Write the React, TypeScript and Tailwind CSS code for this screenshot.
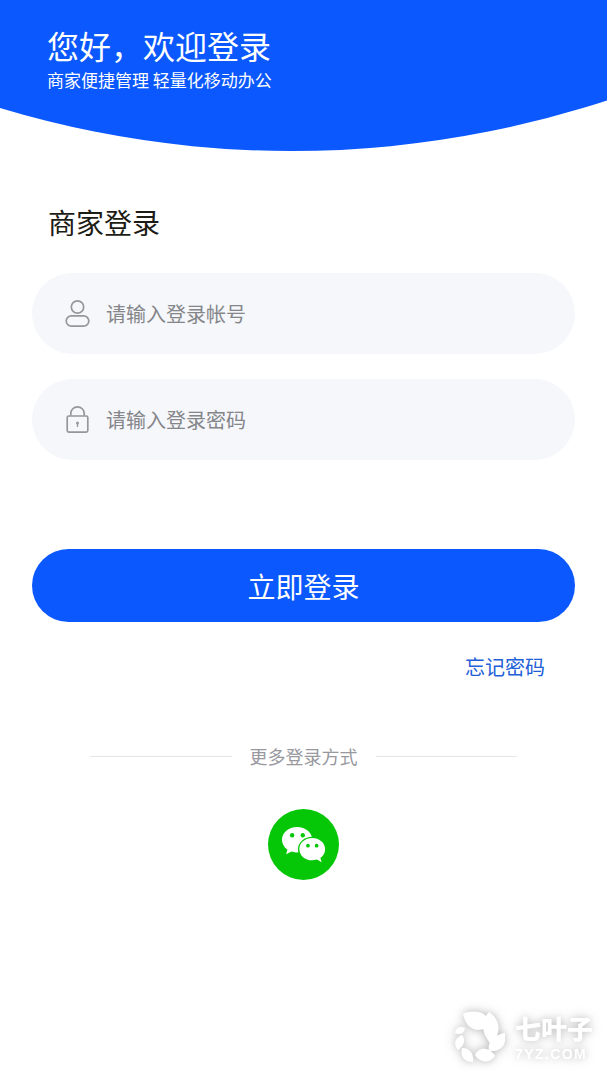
import { useState } from 'react';
import type { FormEvent, ReactNode } from 'react';

type FieldProps = {
  id: string;
  label: string;
  type: string;
  value: string;
  onChange: (value: string) => void;
  icon: ReactNode;
};

const UserIcon = () => (
  <svg width="26" height="30" viewBox="0 0 26 30" fill="none" stroke="#96979b" strokeWidth="1.7" aria-hidden="true">
    <circle cx="13.5" cy="8" r="6.2" />
    <rect x="2.2" y="16.8" width="22.6" height="10.4" rx="5.2" />
  </svg>
);

const LockIcon = () => (
  <svg width="26" height="30" viewBox="0 0 26 30" fill="none" stroke="#96979b" strokeWidth="1.7" aria-hidden="true">
    <rect x="3.2" y="11" width="20.6" height="16.2" rx="1.6" />
    <path d="M6.8 10.8V8.5a6.7 6.7 0 0 1 13.4 0v2.3" />
    <circle cx="13.5" cy="18" r="1.5" fill="#96979b" stroke="none" />
    <path d="M13.5 18v4" strokeWidth="1.3" />
  </svg>
);

const WechatIcon = () => (
  <svg className="w-full h-full" viewBox="0 0 72 72" aria-hidden="true">
    <path fill="#fff" d="M29.5 18.2c-8.7 0-15.3 5.9-15.3 13 0 4.1 2.1 7.6 5.5 10l-1.3 4.8 5.6-2.9c1.7.6 3.5.9 5.5.9 8.6 0 15.500-5.900 15.500-12.800s-6.900-13-15.500-13z" />
    <ellipse cx="44.8" cy="40.8" rx="14.4" ry="12.7" fill="#05c707" />
    <path fill="#fff" d="M44.8 29.5c-7.3 0-13 5-13 11.200 0 6.300 5.700 11.300 13 11.300 1.700 0 3.300-.3 4.800-.8l4.800 2.700-1.300-4.300c2.900-2 4.800-5.200 4.800-8.900 0-6.200-5.800-11.200-13.100-11.200z" />
    <circle cx="24.5" cy="26.6" r="2.2" fill="#05c707" />
    <circle cx="35.3" cy="26.6" r="2.2" fill="#05c707" />
    <circle cx="40.5" cy="37.2" r="1.9" fill="#05c707" />
    <circle cx="49.3" cy="37.2" r="1.9" fill="#05c707" />
  </svg>
);

const LeafLogo = () => (
  <svg width="50" height="56" viewBox="0 0 50 56" fill="#fff" aria-hidden="true">
    <path d="M8 5.500C17 2 27 3 32 9c3 4 4 9 4 14-5-2-8-2-13-1C14 21 10 15 8 5.500z" />
    <path d="M34 4c8 5 12 14 8 24l-6 10c-2-6-6-9-7-14-2-7 0-15 5-20z" />
    <path d="M50 25c2 11-3 19-16 18-2-9 5-16 16-18z" />
    <path d="M20 47c4-9 15-8 20 1-6 8-15 7-20-1z" />
    <path d="M7 40c8 0 12 6 11 14-9 0-13-6-11-14z" />
    <path d="M7 27c4 5 2 11-4 15-5-6-3-12 4-15z" />
    <path d="M0 25c1-6 6-7 10-5-1 6-5 7-10 5z" />
  </svg>
);

const Field = ({ id, label, type, value, onChange, icon }: FieldProps) => (
  <div className="flex items-center h-[81px] gap-4 px-8 bg-[#f5f7fb] rounded-full">
    <label htmlFor={id} aria-label={label} className="shrink-0">
      {icon}
    </label>
    <input
      id={id}
      type={type}
      value={value}
      onChange={e => onChange(e.target.value)}
      placeholder={label}
      className="flex-1 min-w-0 text-xl text-[#333] placeholder:text-[#85868a] bg-transparent outline-none"
    />
  </div>
);

export default function LoginPage() {
  const [account, setAccount] = useState('');
  const [password, setPassword] = useState('');

  const handleSubmit = (e: FormEvent) => {
    e.preventDefault();
  };

  return (
    <div className="flex flex-col min-h-screen bg-white font-['Noto_Sans_CJK_SC',sans-serif]">
      <header className="h-38 px-[47px] pt-[22px] text-white bg-[#0a58fe] [clip-path:circle(1010px_at_48%_-859px)]">
        <h1 className="text-[32px] leading-[46px]">您好，欢迎登录</h1>
        <p className="text-[17px] leading-6">商家便捷管理 轻量化移动办公</p>
      </header>

      <main className="px-8 pt-12">
        <h2 className="px-4 text-[28px] leading-11 text-[#1c1b14]">商家登录</h2>

        <form onSubmit={handleSubmit} className="pt-[29px]">
          <div className="flex flex-col gap-[25px]">
            <Field id="account" label="请输入登录帐号" type="text" value={account} onChange={setAccount} icon={<UserIcon />} />
            <Field id="password" label="请输入登录密码" type="password" value={password} onChange={setPassword} icon={<LockIcon />} />
          </div>
          <button type="submit" className="w-full mt-[89px] h-[73px] rounded-full bg-[#0a58fe] text-[28px] text-white">
            立即登录
          </button>
        </form>

        <div className="flex justify-end px-[30px] pt-[29px]">
          <a href="#forgot" className="text-xl leading-8 text-[#2260d8]">忘记密码</a>
        </div>

        <section className="flex flex-col items-center px-[58px] pt-[59px]">
          <div className="flex items-center w-full gap-[18px]">
            <span className="flex-1 h-px bg-[#e6e6e6]" />
            <h3 className="text-lg leading-7 text-[#98989e]">更多登录方式</h3>
            <span className="flex-1 h-px bg-[#e6e6e6]" />
          </div>
          <button type="button" aria-label="微信登录" className="mt-[39px] w-[71px] h-[71px] rounded-full bg-[#05c707]">
            <WechatIcon />
          </button>
        </section>
      </main>

      <footer className="flex items-center self-end gap-[10px] px-[14px] pt-8 pb-4 mt-auto text-white [filter:drop-shadow(0_0_6px_rgba(0,0,0,0.2))_drop-shadow(0_0_3px_rgba(0,0,0,0.12))]">
        <LeafLogo />
        <div className="flex flex-col">
          <strong className="text-[26px] leading-[36px] font-black">七叶子</strong>
          <span className="text-sm leading-4 font-bold tracking-widest font-['Liberation_Sans',sans-serif]">7YZ.COM</span>
        </div>
      </footer>
    </div>
  );
}
